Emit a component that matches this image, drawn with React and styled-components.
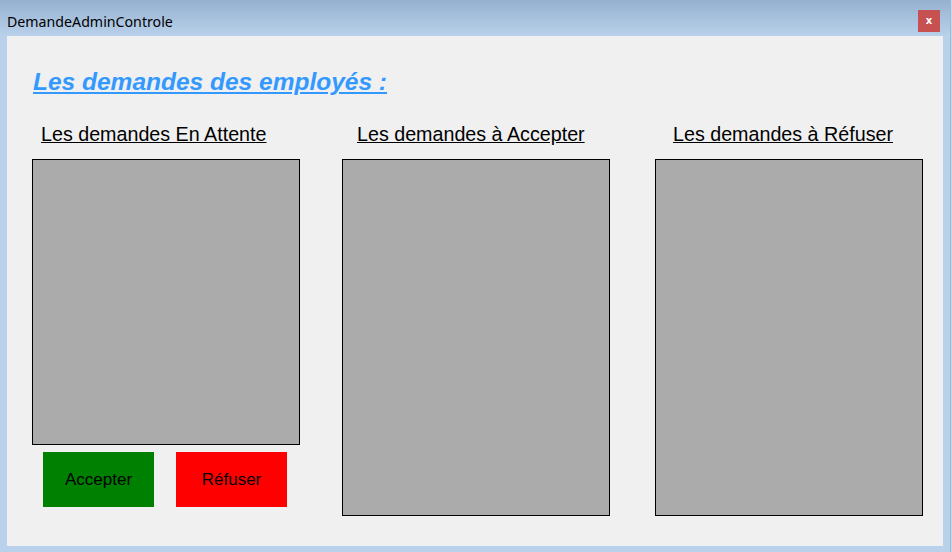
import styled, { createGlobalStyle } from "styled-components"

const Global = createGlobalStyle`
  html, body {
    margin: 0;
    padding: 0;
    background: #b9d1ea;
  }
`

let Window = styled.div`
  width: 951px;
  height: 552px;
  display: flex;
  flex-flow: column;
  background: linear-gradient(to bottom, #95b1d0 0px, #b9d1ea 36px, #b9d1ea 100%);
  box-shadow: inset -1px 0 0 #5fd3f3;
  overflow: hidden;
`
let TitleBar = styled.div`
  height: 36px;
  display: flex;
  flex-flow: row;
  align-items: flex-start;
  justify-content: space-between;
  padding: 0 11px 0 7px;
`
let Title = styled.span`
  font-family: "Noto Sans", "Open Sans", sans-serif;
  font-size: 14.2px;
  color: #000;
  margin-top: 12px;
  line-height: 20px;
`
let CloseBtn = styled.div`
  width: 22px;
  height: 22px;
  margin-top: 10px;
  background: #c75050;
  color: #fff;
  font-family: "DejaVu Sans", sans-serif;
  font-weight: bold;
  font-size: 10px;
  display: flex;
  align-items: center;
  justify-content: center;
  line-height: 1;
`
let Client = styled.div`
  flex: 1;
  margin: 0 8px 6px 7px;
  background: #f0f0f0;
  display: flex;
  flex-flow: column;
  padding: 0 0 0 25px;
`
let Heading = styled.h1`
  margin: 31px 0 0 1px;
  height: 30px;
  line-height: 30px;
  font-family: "Liberation Sans", Arial, sans-serif;
  font-size: 24.5px;
  font-weight: bold;
  font-style: italic;
  color: #3399ff;
  text-decoration: underline;
`
let Columns = styled.div`
  display: flex;
  flex-flow: row;
  align-items: flex-start;
  margin-top: 25px;
`
let Column = styled.section`
  width: 268px;
  margin-left: ${ props => props.$ml || 0 }px;
  display: flex;
  flex-flow: column;
`
let Label = styled.div`
  height: 24px;
  line-height: 24px;
  padding-left: ${ props => props.$pl }px;
  font-family: "Liberation Sans", Arial, sans-serif;
  font-size: 19.7px;
  color: #000;
  text-decoration: underline;
  white-space: nowrap;
`
let ListBox = styled.div`
  margin-top: 13px;
  height: ${ props => props.$h }px;
  box-sizing: border-box;
  background: #ababab;
  border: 1px solid #000;
`
let ButtonRow = styled.div`
  display: flex;
  flex-flow: row;
  gap: 22px;
  padding-left: 11px;
  margin-top: 7px;
`
let ActionBtn = styled.div`
  width: 111px;
  height: 55px;
  background: ${ props => props.$bg };
  display: flex;
  align-items: center;
  justify-content: center;
  font-family: "Liberation Sans", Arial, sans-serif;
  font-size: 17px;
  color: #000;
`

const columns = [
  { label: "Les demandes En Attente", pl: 9, ml: 0, h: 286, buttons: true },
  { label: "Les demandes à Accepter", pl: 15, ml: 42, h: 357 },
  { label: "Les demandes à Réfuser", pl: 18, ml: 45, h: 357 },
]

export default function App() {
  return (
    <>
      <Global />
      <Window>
        <TitleBar>
          <Title>DemandeAdminControle</Title>
          <CloseBtn>x</CloseBtn>
        </TitleBar>
        <Client>
          <Heading>Les demandes des employés :</Heading>
          <Columns>
            {columns.map((c) => (
              <Column key={c.label} $ml={c.ml}>
                <Label $pl={c.pl}>{c.label}</Label>
                <ListBox $h={c.h} />
                {c.buttons && (
                  <ButtonRow>
                    <ActionBtn $bg="#008000">Accepter</ActionBtn>
                    <ActionBtn $bg="#ff0000">Réfuser</ActionBtn>
                  </ButtonRow>
                )}
              </Column>
            ))}
          </Columns>
        </Client>
      </Window>
    </>
  )
}
